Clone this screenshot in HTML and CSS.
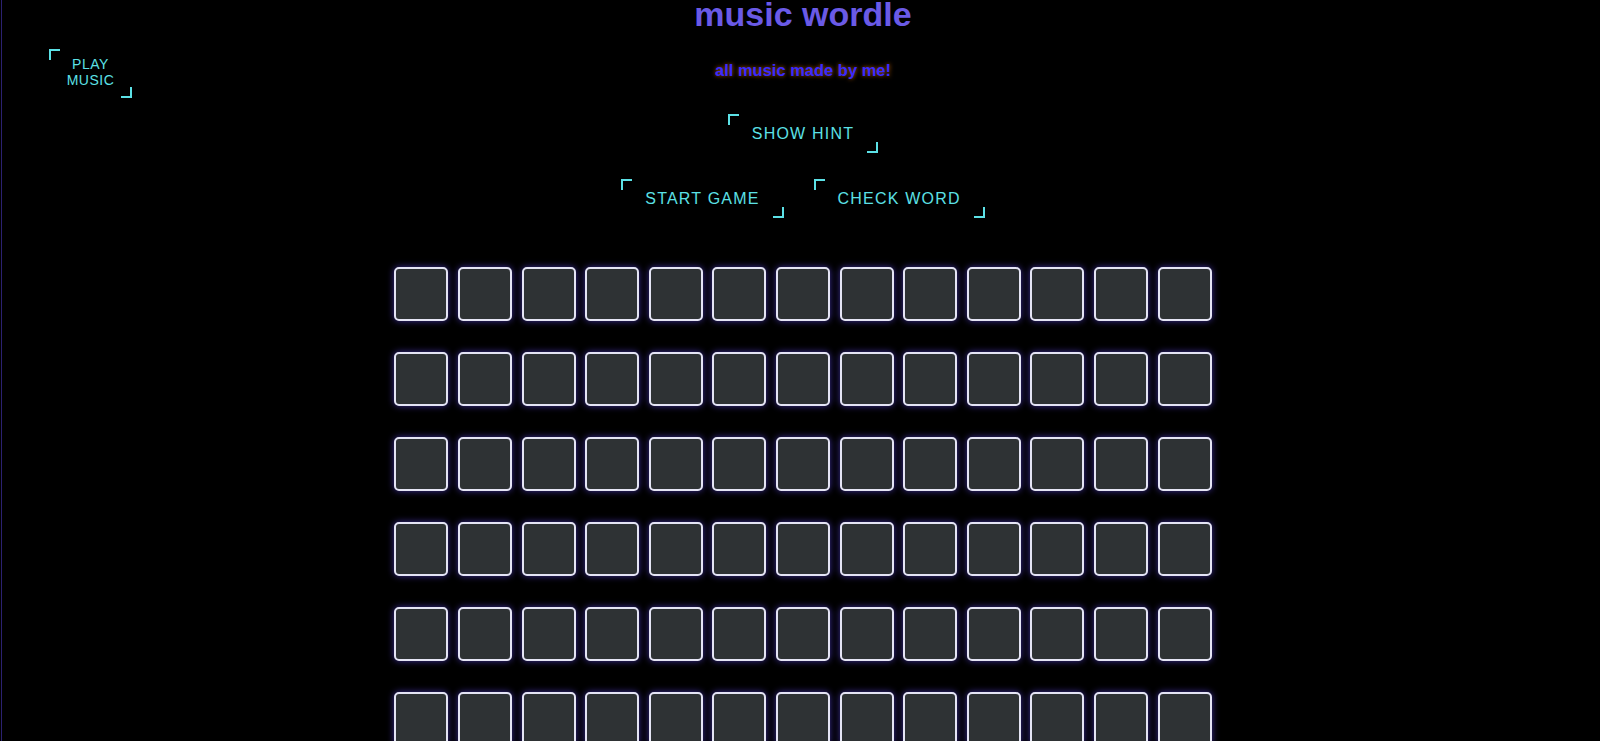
FILE: index.html
```html
<!DOCTYPE html>
<html lang="en">
  <head>
    <meta charset="UTF-8" />
    <meta name="viewport" content="width=device-width, initial-scale=1.0" />
    <title>music wordle</title>

    <link rel="stylesheet" href="styles.css">
  </head>
  <body>
    <button class="btn btn--music" type="button">PLAY MUSIC</button>

    <main class="game">
      <h1 class="game__title">music wordle</h1>
      <p class="game__subtitle">all music made by me!</p>

      <div class="controls">
        <button class="btn" type="button">SHOW HINT</button>
      </div>
      <div class="controls controls--row">
        <button class="btn" type="button">START GAME</button>
        <button class="btn" type="button">CHECK WORD</button>
      </div>

      <!-- tiles get filled in below -->
      <div class="board" id="board"></div>
    </main>

    <script>
      // 6 guesses, 13 letters each
      const ROWS = 6;
      const COLS = 13;
      const board = document.getElementById("board");

      for (let r = 0; r < ROWS; r++) {
        for (let c = 0; c < COLS; c++) {
          const tile = document.createElement("div");
          tile.className = "board__tile";
          board.appendChild(tile);
        }
      }
    </script>
  </body>
</html>
```

FILE: styles.css
```css
* {
  box-sizing: border-box;
}

html,
body {
  margin: 0;
  background-color: #000000;
}

body {
  min-height: 100vh;
  font-family: "Liberation Sans", Arial, sans-serif;
  border-left: 1px solid #000000;
  box-shadow: inset 1px 0 0 #2b2170;
}

.game {
  display: flex;
  flex-direction: column;
  align-items: center;
  padding-left: 5px;
}

.game__title {
  margin: -3px 0 0;
  font-size: 34px;
  line-height: 34px;
  font-weight: bold;
  color: #6a5ae6;
}

.game__subtitle {
  margin: 29px 0 0;
  font-size: 16.5px;
  line-height: 20px;
  font-weight: bold;
  color: #3a2aff;
  text-shadow: 0 0 4px #b05a00;
}

.controls {
  display: flex;
  justify-content: center;
  gap: 30px;
  margin-top: 34px;
}

.controls--row {
  margin-top: 26px;
}

/* bracket buttons */
.btn {
  position: relative;
  padding: 10px 24px;
  border: none;
  background: none;
  color: #5ce1e6;
  font-family: "Liberation Sans", Arial, sans-serif;
  font-size: 16px;
  line-height: 19px;
  letter-spacing: 1.2px;
  cursor: pointer;
}

.btn::before,
.btn::after {
  content: "";
  position: absolute;
  width: 9px;
  height: 9px;
  border: 0 solid #5ce1e6;
}

.btn::before {
  top: 0;
  left: 0;
  border-top-width: 2px;
  border-left-width: 2px;
}

.btn::after {
  right: 0;
  bottom: 0;
  border-right-width: 2px;
  border-bottom-width: 2px;
}

.btn--music {
  position: absolute;
  top: 49px;
  left: 49px;
  width: 83px;
  padding: 7px 0 10px;
  font-size: 14px;
  line-height: 16px;
  letter-spacing: 0.5px;
  text-align: center;
}

.board {
  display: grid;
  grid-template-columns: repeat(13, 54px);
  grid-auto-rows: 54px;
  column-gap: 9.6px;
  row-gap: 31px;
  margin-top: 49px;
}

.board__tile {
  border: 2px solid #e4e4f4;
  border-radius: 5px;
  background-color: #2e3234;
  box-shadow: 0 0 7px #3d2f96;
}
```
